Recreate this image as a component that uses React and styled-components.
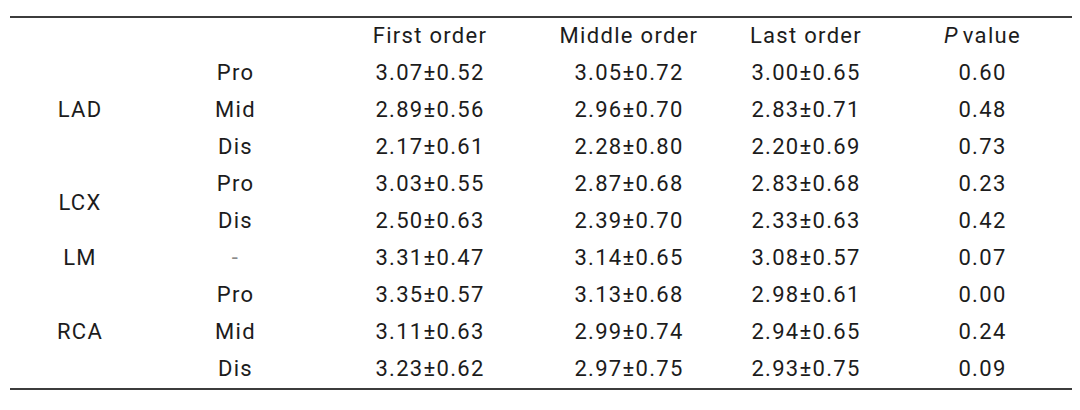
import React from "react";
import styled, { createGlobalStyle } from "styled-components";

const Global = createGlobalStyle`
  html, body { margin: 0; padding: 0; background: #ffffff; }
  body { font-family: Roboto, "Liberation Sans", sans-serif; }
`;

const Page = styled.div`
  padding: 16px 0 0 10px;
  width: 1080px;
  height: 410px;
  box-sizing: border-box;
  background: #fff;
`;

const Table = styled.table`
  width: 1062px;
  border-collapse: collapse;
  table-layout: fixed;
  border-top: 2px solid #3c3c3c;
  border-bottom: 2px solid #3c3c3c;
  font-family: Roboto, "Liberation Sans", sans-serif;
  font-size: 22px;
  letter-spacing: 1.3px;
  color: #1c1c1c;
`;

const Cell = styled.td`
  box-sizing: border-box;
  height: 37px;
  padding: 0 0 1px 0;
  text-align: center;
  vertical-align: middle;
  white-space: nowrap;
  line-height: 36px;
`;

const HeadCell = styled(Cell).attrs({ as: "th" })`
  font-weight: 400;
`;

const Em = styled.i`
  font-style: italic;
  margin-right: 4px;
`;

const Dash = styled.span`
  color: #8a8a8a;
`;

const widths = [140, 171, 218, 180, 174, 179];

const groups = [
  {
    name: "LAD",
    rows: [
      ["Pro", "3.07±0.52", "3.05±0.72", "3.00±0.65", "0.60"],
      ["Mid", "2.89±0.56", "2.96±0.70", "2.83±0.71", "0.48"],
      ["Dis", "2.17±0.61", "2.28±0.80", "2.20±0.69", "0.73"],
    ],
  },
  {
    name: "LCX",
    rows: [
      ["Pro", "3.03±0.55", "2.87±0.68", "2.83±0.68", "0.23"],
      ["Dis", "2.50±0.63", "2.39±0.70", "2.33±0.63", "0.42"],
    ],
  },
  {
    name: "LM",
    rows: [["-", "3.31±0.47", "3.14±0.65", "3.08±0.57", "0.07"]],
  },
  {
    name: "RCA",
    rows: [
      ["Pro", "3.35±0.57", "3.13±0.68", "2.98±0.61", "0.00"],
      ["Mid", "3.11±0.63", "2.99±0.74", "2.94±0.65", "0.24"],
      ["Dis", "3.23±0.62", "2.97±0.75", "2.93±0.75", "0.09"],
    ],
  },
];

export default function App() {
  return (
    <Page>
      <Global />
      <Table>
        <colgroup>
          {widths.map((w, i) => (
            <col key={i} style={{ width: w }} />
          ))}
        </colgroup>
        <thead>
          <tr>
            <HeadCell />
            <HeadCell />
            <HeadCell>First order</HeadCell>
            <HeadCell>Middle order</HeadCell>
            <HeadCell>Last order</HeadCell>
            <HeadCell>
              <Em>P</Em>value
            </HeadCell>
          </tr>
        </thead>
        <tbody>
          {groups.map((g) =>
            g.rows.map((r, i) => (
              <tr key={g.name + i}>
                {i === 0 && <Cell rowSpan={g.rows.length}>{g.name}</Cell>}
                <Cell>{r[0] === "-" ? <Dash>-</Dash> : r[0]}</Cell>
                <Cell>{r[1]}</Cell>
                <Cell>{r[2]}</Cell>
                <Cell>{r[3]}</Cell>
                <Cell>{r[4]}</Cell>
              </tr>
            ))
          )}
        </tbody>
      </Table>
    </Page>
  );
}
